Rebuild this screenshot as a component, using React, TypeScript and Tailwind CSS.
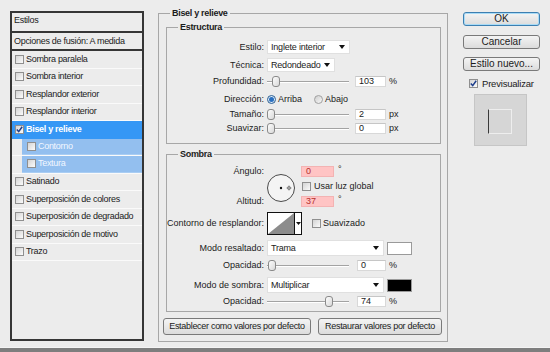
import React from "react";

const Check = ({ checked = false }: { checked?: boolean }) => (
  <span className="flex h-[9px] w-[9px] shrink-0 items-center justify-center border border-[#8f8f8f] bg-linear-to-br from-[#d4d4d4] to-[#fbfbfb]">
    {checked && (
      <svg width="7" height="7" viewBox="0 0 7 7">
        <path d="M0.8 3.6 L2.7 5.6 L6.2 0.8" stroke="#1d3e8c" strokeWidth="1.5" fill="none" />
      </svg>
    )}
  </span>
);

const Radio = ({ checked = false }: { checked?: boolean }) => (
  <span
    className={
      checked
        ? "flex h-[9px] w-[9px] shrink-0 items-center justify-center rounded-full border border-[#2d5f91] bg-[#dbe9f7]"
        : "flex h-[9px] w-[9px] shrink-0 items-center justify-center rounded-full border border-[#a0a0a0] bg-linear-to-br from-[#cfcfcf] to-[#f8f8f8]"
    }
  >
    {checked && <span className="h-[5px] w-[5px] rounded-full bg-[#2a6fc0]" />}
  </span>
);

const Arrow = () => (
  <svg width="6" height="4" viewBox="0 0 6 4">
    <path d="M0 0H6L3 4Z" fill="#111" />
  </svg>
);

const Select = ({ className, text }: { className: string; text: string }) => (
  <div className={`flex items-center justify-between border border-[#e0e0e0] bg-white pl-[3px] pr-[4px] tracking-[-0.2px] ${className}`}>
    <span>{text}</span>
    <Arrow />
  </div>
);

const Input = ({ className, v }: { className: string; v: string }) => (
  <div className={`flex h-[11px] items-center border border-[#d8d8d8] border-t-[#c6c6c6] bg-white pl-[3px] ${className}`}>{v}</div>
);

const Pink = ({ v }: { v: string }) => (
  <div className="flex h-[11px] w-[33px] items-center border border-[#f3b3b3] bg-[#ffc4c4] pl-[4px] text-[#b3302f]">{v}</div>
);

const Thumb = () => (
  <svg width="8" height="11" viewBox="0 0 8 11">
    <defs>
      <linearGradient id="tg" x1="0" y1="0" x2="1" y2="1">
        <stop offset="0" stopColor="#ffffff" />
        <stop offset="1" stopColor="#d6d6d6" />
      </linearGradient>
    </defs>
    <rect x="0.5" y="0.5" width="7" height="10" rx="2.5" fill="url(#tg)" stroke="#8a8a8a" />
  </svg>
);

const Track = ({ pos }: { pos: number }) => (
  <div className="relative h-[11px] w-[82px]">
    <div className="absolute left-0 right-0 top-[5px] h-px bg-[#a3a3a3]" />
    <div className="absolute left-0 right-0 top-[6px] h-px bg-white" />
    <div className="absolute top-0" style={{ left: pos }}>
      <Thumb />
    </div>
  </div>
);

const Label = ({ children }: { children: React.ReactNode }) => (
  <span className="flex w-[97px] shrink-0 justify-end whitespace-nowrap">{children}</span>
);

const Row = ({ label, className, children }: { label: string; className: string; children: React.ReactNode }) => (
  <div className={`flex items-center ${className}`}>
    <Label>{label}</Label>
    <div className="ml-[3px] flex items-center">{children}</div>
  </div>
);

const Btn = ({ className, children, ok = false }: { className: string; children: React.ReactNode; ok?: boolean }) => (
  <div
    className={`flex items-center justify-center whitespace-nowrap rounded-[3px] border bg-linear-to-b from-[#f4f4f4] to-[#dcdcdc] ${
      ok ? "border-[#3c7fb1] shadow-[inset_0_0_0_1px_#a9dbf6]" : "border-[#7a7a7a]"
    } ${className}`}
  >
    {children}
  </div>
);

const items: { t: string; sel?: boolean; sub?: boolean }[] = [
  { t: "Sombra paralela" },
  { t: "Sombra interior" },
  { t: "Resplandor exterior" },
  { t: "Resplandor interior" },
  { t: "Bisel y relieve", sel: true },
  { t: "Contorno", sub: true },
  { t: "Textura", sub: true },
  { t: "Satinado" },
  { t: "Superposición de colores" },
  { t: "Superposición de degradado" },
  { t: "Superposición de motivo" },
  { t: "Trazo" },
];

export default function App() {
  return (
    <div className="flex h-[352px] w-[550px] flex-col overflow-hidden bg-[#ececec] font-['Liberation_Sans',Arial,sans-serif] text-[9px] leading-[11px] tracking-[-0.3px] text-[#1b1b1b]">
      <div className="flex flex-1 items-start">
        {/* Styles list */}
        <div className="ml-[10px] mt-[11px] flex h-[330px] w-[134px] flex-col border-2 border-[#363636] bg-[#ececec]">
          <div className="flex h-[20px] shrink-0 items-center border-b-2 border-[#363636] pb-[3px] pl-[2px]">Estilos</div>
          <div className="flex h-[18px] shrink-0 items-center border-b-2 border-[#363636] pl-[2px]">Opciones de fusión: A medida</div>
          {items.map((it) =>
            it.sub ? (
              <div key={it.t} className="h-[17.5px] shrink-0 border-b border-[#fafafa]">
                <div className="ml-[10px] flex h-full items-center border-b border-[#a9cdf3] bg-[#93bfef] pl-[5px] text-[#f2f7ff]">
                  <Check />
                  <span className="ml-[2px]">{it.t}</span>
                </div>
              </div>
            ) : it.sel ? (
              <div key={it.t} className="flex h-[17.5px] shrink-0 items-center bg-[#3597f5] pl-[3px] font-bold text-white">
                <Check checked />
                <span className="ml-[2px]">{it.t}</span>
              </div>
            ) : (
              <div key={it.t} className="flex h-[17.5px] shrink-0 items-center border-b border-[#fafafa] pl-[3px]">
                <Check />
                <span className="ml-[2px]">{it.t}</span>
              </div>
            )
          )}
        </div>

        {/* Main group */}
        <fieldset className="ml-[14px] mt-[8px] w-[290px] border border-[#a7a7a7] px-0 pb-[6px] tracking-normal">
          <legend className="ml-[11px] px-[2px] font-bold tracking-[-0.3px]">Bisel y relieve</legend>

          <fieldset className="ml-[7px] mt-[3px] w-[275px] border border-[#a7a7a7] px-0 pb-[9px]">
            <legend className="ml-[11px] px-[2px] font-bold tracking-[-0.3px]">Estructura</legend>
            <Row label="Estilo:" className="mt-[7px] h-[14px]">
              <Select className="h-[14px] w-[83px]" text="Inglete interior" />
            </Row>
            <Row label="Técnica:" className="mt-[4px] h-[14px]">
              <Select className="h-[14px] w-[68px]" text="Redondeado" />
            </Row>
            <Row label="Profundidad:" className="mt-[4px] h-[11px]">
              <Track pos={5} />
              <Input className="ml-[6px] w-[31px]" v="103" />
              <span className="ml-[3px]">%</span>
            </Row>
            <Row label="Dirección:" className="mt-[6px] h-[12px]">
              <Radio checked />
              <span className="ml-[2px]">Arriba</span>
              <span className="ml-[12px]">
                <Radio />
              </span>
              <span className="ml-[2px]">Abajo</span>
            </Row>
            <Row label="Tamaño:" className="mt-[4px] h-[11px]">
              <Track pos={0} />
              <Input className="ml-[6px] w-[31px]" v="2" />
              <span className="ml-[3px]">px</span>
            </Row>
            <Row label="Suavizar:" className="mt-[3px] h-[11px]">
              <Track pos={0} />
              <Input className="ml-[6px] w-[31px]" v="0" />
              <span className="ml-[3px]">px</span>
            </Row>
          </fieldset>

          <fieldset className="ml-[7px] mt-[5px] w-[275px] border border-[#a7a7a7] px-0 pb-[4px]">
            <legend className="ml-[11px] px-[2px] font-bold tracking-[-0.3px]">Sombra</legend>

            <div className="mt-[6px] flex h-[41px]">
              <div className="flex w-[97px] shrink-0 flex-col items-end justify-between">
                <span>Ángulo:</span>
                <span>Altitud:</span>
              </div>
              <svg className="ml-[2px] mt-[7px]" width="30" height="30" viewBox="0 0 30 30">
                <circle cx="15" cy="15" r="13.5" fill="#f4f4f4" stroke="#4a4a4a" strokeWidth="1" />
                <circle cx="15" cy="15" r="1.2" fill="#111" />
                <circle cx="23" cy="15" r="1.6" fill="none" stroke="#666" strokeWidth="0.6" />
                <path d="M20.5 15H25.5M23 12.5V17.5" stroke="#555" strokeWidth="0.6" />
              </svg>
              <div className="ml-[5px] flex flex-col">
                <div className="flex items-start">
                  <Pink v="0" />
                  <span className="ml-[4px] -mt-[2px]">°</span>
                </div>
                <div className="ml-[1px] mt-[5px] flex h-[9px] items-center">
                  <Check />
                  <span className="ml-[3px]">Usar luz global</span>
                </div>
                <div className="mt-[5px] flex items-start">
                  <Pink v="37" />
                  <span className="ml-[4px] -mt-[2px]">°</span>
                </div>
              </div>
            </div>

            <div className="mt-[5px] flex h-[23px] items-center">
              <Label>Contorno de resplandor:</Label>
              <div className="ml-[3px] flex h-[23px]">
                <div className="h-[23px] w-[28px] border border-[#111] bg-white">
                  <svg width="26" height="21" viewBox="0 0 26 21" className="block">
                    <polygon points="0,21 26,0 26,21" fill="#8c8c8c" />
                  </svg>
                </div>
                <div className="flex h-[23px] w-[7px] items-center justify-center border border-l-0 border-[#111] bg-white">
                  <svg width="5" height="3" viewBox="0 0 5 3">
                    <path d="M0 0H5L2.5 3Z" fill="#111" />
                  </svg>
                </div>
              </div>
              <div className="ml-[10px] flex items-center">
                <Check />
                <span className="ml-[2px]">Suavizado</span>
              </div>
            </div>

            <Row label="Modo resaltado:" className="mt-[5px] h-[16px]">
              <Select className="h-[16px] w-[117px]" text="Trama" />
              <div className="ml-[3px] h-[13px] w-[25px] border border-[#9a9a9a] bg-white" />
            </Row>
            <Row label="Opacidad:" className="mt-[4px] h-[11px]">
              <Track pos={1} />
              <Input className="ml-[8px] w-[29px]" v="0" />
              <span className="ml-[3px]">%</span>
            </Row>
            <Row label="Modo de sombra:" className="mt-[6px] h-[16px]">
              <Select className="h-[16px] w-[117px]" text="Multiplicar" />
              <div className="ml-[3px] h-[13px] w-[25px] border border-[#9a9a9a] bg-black" />
            </Row>
            <Row label="Opacidad:" className="mt-[3px] h-[11px]">
              <Track pos={58} />
              <Input className="ml-[8px] w-[29px]" v="74" />
              <span className="ml-[3px]">%</span>
            </Row>
          </fieldset>

          <div className="ml-[4px] mt-[6px] flex gap-[7px] tracking-[-0.3px]">
            <Btn className="h-[17px] w-[148px]">Establecer como valores por defecto</Btn>
            <Btn className="h-[17px] w-[124px]">Restaurar valores por defecto</Btn>
          </div>
        </fieldset>

        {/* Right column */}
        <div className="ml-[15px] mt-[12px] flex w-[77px] flex-col text-[10px] leading-[12px] tracking-normal">
          <Btn ok className="h-[14px]">OK</Btn>
          <Btn className="mt-[9px] h-[14px]">Cancelar</Btn>
          <Btn className="mt-[8px] h-[14px]">Estilo nuevo...</Btn>
          <div className="ml-[6px] mt-[7px] flex h-[11px] items-center">
            <Check checked />
            <span className="ml-[4px] text-[9.5px] tracking-[-0.2px]">Previsualizar</span>
          </div>
          <div className="ml-[11px] mt-[5px] h-[52px] w-[53px] border border-[#c6c6c6] bg-[#d6d6d6] pl-[13px] pt-[14px]">
            <div className="h-[25px] w-[24px] border border-[#eeeeee] border-l-[#3a3a3a]" />
          </div>
        </div>
      </div>
      <div className="h-[5px] shrink-0 border-t border-[#f4f4f4] bg-[#7e7e7e]" />
    </div>
  );
}
